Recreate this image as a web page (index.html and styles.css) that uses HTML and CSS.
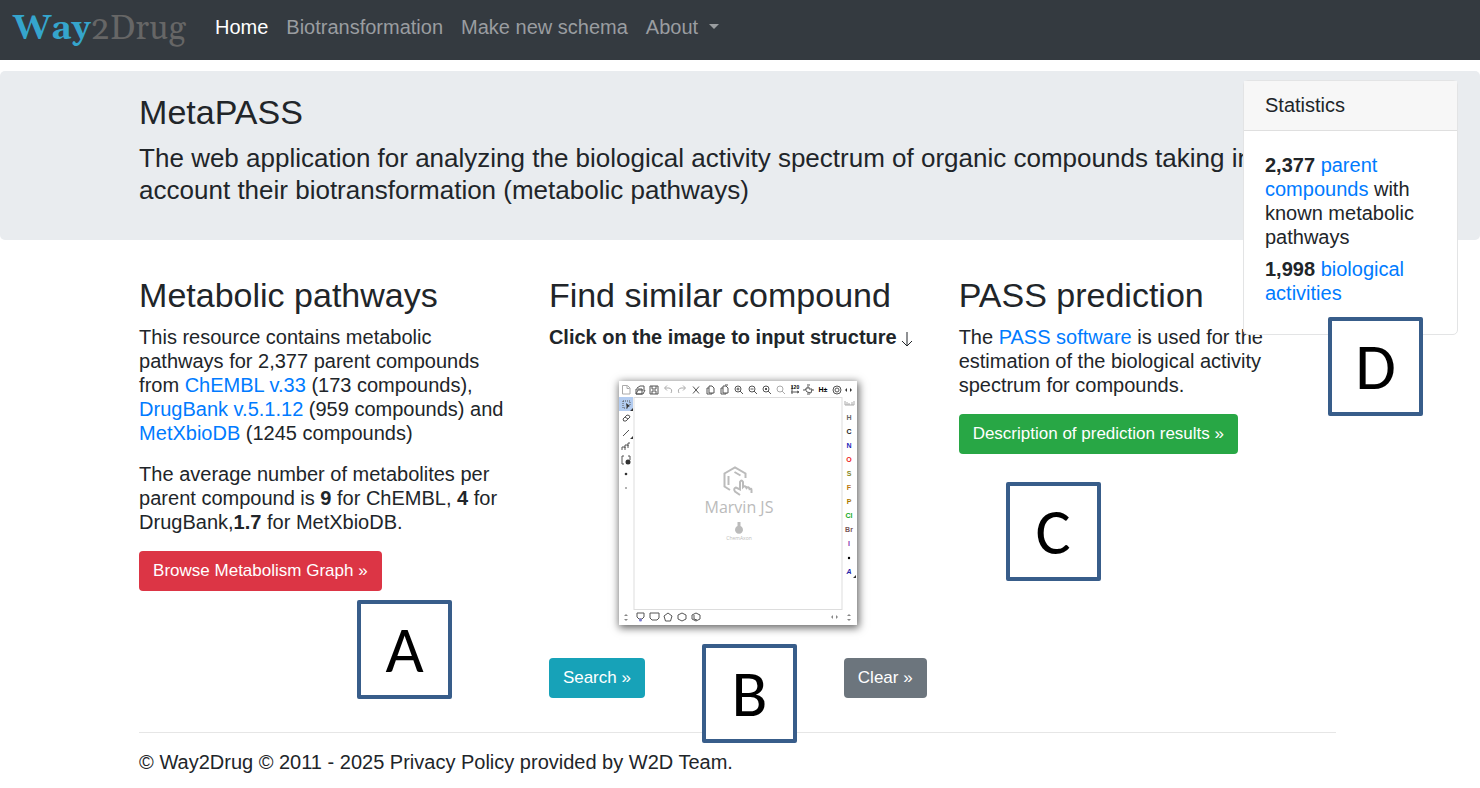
FILE: index.html
```html
<!DOCTYPE html>
<html lang="en">
<head>
<meta charset="utf-8">
<meta name="viewport" content="width=device-width, initial-scale=1">
<title>MetaPASS</title>
<link rel="stylesheet" href="styles.css">
</head>
<body>
<nav class="navbar">
  <a class="brand" href="#"><b>Way</b>2Drug</a>
  <a class="nav-link active" href="#">Home</a>
  <a class="nav-link" href="#">Biotransformation</a>
  <a class="nav-link" href="#">Make new schema</a>
  <a class="nav-link dropdown" href="#">About</a>
</nav>

<header class="hero">
  <div class="container">
    <h1>MetaPASS</h1>
    <p class="lead">The web application for analyzing the biological activity spectrum of organic compounds taking into account their biotransformation (metabolic pathways)</p>
  </div>
</header>

<aside class="stats">
  <h3>Statistics</h3>
  <div class="stats-body">
    <p><b>2,377</b> <a href="#">parent compounds</a> with known metabolic pathways</p>
    <p><b>1,998</b> <a href="#">biological activities</a></p>
  </div>
</aside>

<main class="container columns">
  <section>
    <h2>Metabolic pathways</h2>
    <p>This resource contains metabolic pathways for 2,377 parent compounds from <a href="#">ChEMBL v.33</a> (173 compounds), <a href="#">DrugBank v.5.1.12</a> (959 compounds) and <a href="#">MetXbioDB</a> (1245 compounds)</p>
    <p>The average number of metabolites per parent compound is <b>9</b> for ChEMBL, <b>4</b> for DrugBank,<b>1.7</b> for MetXbioDB.</p>
    <button class="btn red" type="button">Browse Metabolism Graph »</button>
    <span class="callout callout-a">A</span>
  </section>
  <section>
    <h2>Find similar compound</h2>
    <p class="hint"><b>Click on the image to input structure</b><svg class="arrow" viewBox="0 0 12 18" aria-hidden="true"><path d="M6 1V15M1 10L6 15L11 10"/></svg></p>
    <a class="editor" href="#" aria-label="Structure editor">
      <svg viewBox="0 0 238 244">
        <rect width="238" height="244" fill="#fff"/>
        <rect y="16" width="14" height="14" fill="#b3ccf0"/>
        <rect x="15" y="16.5" width="208" height="212" fill="#fff" stroke="#ddd"/>
        <g class="ink">
          <path class="pale" d="M3.500 4.500h5l2.500 2.500v6H3.500zM8 5v2.500h2.500"/>
          <path d="M17 13V8h6v5zM17 13l2-4h7l-2 4zM18 7l3-2h4v3"/>
          <path d="M31 5h8v8h-8zM33 5v3h4V5M33 13v-3h4v3"/>
          <path class="pale" d="M46 7h4q4 1 2 5M48 4.500l-2.500 2.500L48 9.500"/>
          <path class="pale" d="M66 7h-4q-4 1-2 5M64 4.500l2.500 2.500L64 9.500"/>
          <path d="M74 5.500l6 7M80 5.500l-6 7"/>
          <path d="M90 5h3l2 2v5h-5zM90 7h-2v6h5v-1"/>
          <path d="M104 5h3l2 2v5h-5zM104 7h-2v6h5v-1M106 4h3"/>
          <circle cx="119" cy="8" r="3"/><path d="M121 10l3 3M117.500 8h3M119 6.500v3"/>
          <circle cx="133" cy="8" r="3"/><path d="M135 10l3 3M131.500 8h3"/>
          <circle cx="147" cy="8" r="3"/><path d="M149 10l3 3M146 7l2 2M148 7l-2 2"/>
          <g class="pale"><circle cx="161" cy="8" r="3"/><path d="M163 10l3 3"/></g>
          <path d="M173 5v8M172 11h8M178 10l2 1-2 1"/>
          <path d="M188 4h3M188 13h3M184 9h2M193 9h2M188 11l-2-3h2V6h2v2h3l-1 4z"/>
          <circle cx="218" cy="9" r="4"/><circle cx="218" cy="9" r="2"/>
          <path d="M4 20h7v4M4 20v7h4" stroke-dasharray="1 1"/>
          <path d="M4 38l4-4q3 0 3 2l-4 4q-3 1-3-2zM6 36l3 2"/>
          <path d="M4 55l6-6"/>
          <path d="M3 69v-3h3v3M6 67v-3h3v3M9 65v-3h2"/>
          <path d="M5 75H3v8h2M9 75h2v4"/>
          <path d="M18 232h7v4l-2 2h-3l-2-2z"/>
          <path d="M31 232h9v5l-2 2h-5l-2-2z"/>
          <path d="M49 232l4 3-1.500 5h-5L45 235z"/>
          <path d="M63 232l4 2v4l-4 2-4-2v-4z"/>
          <path d="M77 232l4 2v4l-4 2-4-2v-4zM75 234v4l3 1"/>
          <path class="pale" d="M226 20v4h9v-4M228 24v-3M230 24v-2M233 24v-3"/>
        </g>
        <path class="solid" d="M7 22l4 3-2 1-1 2zM14 27v3h-3zM14 55v3h-3zM228 7v4l-2-2zM231 7v4l2-2zM237 194v3h-3z"/>
        <path class="faded" d="M214 234v4l-2-2zM217 234v4l2-2zM5 235l2-2 2 2zM5 238l2 2 2-2zM228 235l2-2 2 2zM228 238l2 2 2-2z"/>
        <circle cx="9" cy="81" r="2.500" fill="#333"/><circle cx="7" cy="93" r="1.300" fill="#333"/><circle cx="7" cy="107" r="1" fill="#999"/><circle cx="230" cy="177" r="1.200"/><circle cx="21.500" cy="239" r="1.500" fill="#77c"/>
        <g class="symbols">
          <text class="degrees" x="176" y="8">120</text><text x="204" y="11">H±</text>
          <text x="230" y="39" fill="#666">H</text><text x="230" y="53" fill="#222">C</text><text x="230" y="67" fill="#22b">N</text><text x="230" y="81" fill="#e22">O</text><text x="230" y="95" fill="#882">S</text><text x="230" y="109" fill="#b71">F</text><text x="230" y="123" fill="#a70">P</text><text x="230" y="137" fill="#1a2">Cl</text><text x="230" y="151" fill="#755">Br</text><text x="230" y="165" fill="#83a">I</text><text x="230" y="193" fill="#22a" font-style="italic">A</text>
        </g>
        <g class="logo">
          <path d="M111 109l-5.500-3.500V92.500l10.500-6 10.500 6V97M109.500 95v9M115.500 91l6 3.500"/>
          <path d="M121 114l-5-3.500q-2-3 1-4l4 2V101q1.500-3 3 0v5q2-2 3.500 1 2-2 3 1 2-1 2 1v3"/>
        </g>
        <text class="marvin" x="120" y="132">Marvin JS</text>
        <path d="M118.500 141h3v4a4 4 0 1 1-3 0z" fill="#bbb"/>
        <text class="maker" x="120" y="159">ChemAxon</text>
      </svg>
    </a>
    <div class="actions">
      <button class="btn teal" type="button">Search »</button>
      <button class="btn gray" type="button">Clear »</button>
    </div>
    <span class="callout callout-b">B</span>
  </section>
  <section>
    <h2>PASS prediction</h2>
    <p>The <a href="#">PASS software</a> is used for the estimation of the biological activity spectrum for compounds.</p>
    <button class="btn green" type="button">Description of prediction results »</button>
    <span class="callout callout-c">C</span>
  </section>
</main>
<span class="callout callout-d">D</span>

<footer class="container footer">
  <p>© Way2Drug © 2011 - 2025 Privacy Policy provided by W2D Team.</p>
</footer>
</body>
</html>
```
FILE: styles.css
```css
* { box-sizing: border-box; }
body {
  position: relative;
  margin: 0;
  background: #fff;
  color: #212529;
  font: 20px/24px "Liberation Sans", Arial, sans-serif;
}
a { color: #007bff; text-decoration: none; }
h1, h2, h3, p { margin: 0; }
h1, h2 { font-size: 34px; line-height: 40px; font-weight: 400; margin-bottom: 10px; }
.container { width: 80.9%; margin: 0 auto 0 9.4%; }

.navbar {
  display: flex;
  align-items: center;
  gap: 18px;
  height: 60px;
  padding: 0 13px 6px;
  background: #343a40;
}
.brand { margin-right: 11px; padding-top: 4px; color: #666; font: 34px/40px Gelasio, Georgia, "Liberation Serif", serif; }
.brand b { color: #35a5cd; }
.nav-link { color: #9a9da0; }
.nav-link.active { color: #fff; }
.dropdown::after {
  content: "";
  display: inline-block;
  margin-left: 11px;
  vertical-align: 5px;
  border: 5px solid transparent;
  border-top-color: currentColor;
  border-bottom: 0;
}

.hero { margin-top: 11px; padding: 21px 0 34px; background: #e9ecef; border-radius: 5px; }
.lead { font-size: 26px; line-height: 32px; }

.stats {
  position: absolute;
  z-index: 1;
  top: 80px;
  right: 22px;
  width: 215px;
  border: 1px solid #e3e4e5;
  border-radius: 5px;
  background: #fff;
}
.stats h3 {
  padding: 12px 21px 13px;
  font-size: 20px;
  line-height: 24px;
  font-weight: 400;
  background: #f7f7f7;
  border-bottom: 1px solid #dfdfdf;
}
.stats-body { padding: 22px 21px 29px; }
.stats-body p + p { margin-top: 8px; }

.columns {
  display: grid;
  grid-template-columns: repeat(3, 1fr);
  gap: 32px;
  padding-top: 35px;
}
.columns section { position: relative; }
.columns p { margin-bottom: 17px; }
.btn {
  height: 40px;
  padding: 0 14px;
  border: 0;
  border-radius: 4px;
  color: #fff;
  font: 17px/24px "Liberation Sans", Arial, sans-serif;
}
.red { background: #dc3545; }
.green { background: #28a745; }
.teal { background: #17a2b8; }
.gray { background: #6c757d; }

.arrow { width: 12px; height: 18px; margin-left: 4px; vertical-align: -5px; fill: none; stroke: #212529; }
.editor { display: block; width: 238px; margin: 32px auto 33px; box-shadow: 1px 2px 8px 1px #666; }
.editor svg { display: block; width: 100%; }
.ink { fill: none; stroke: #555; stroke-width: 1; }
.pale { stroke: #aaa; }
.solid { fill: #333; }
.faded { fill: #888; }
.symbols { font: bold 7px "Liberation Sans", sans-serif; text-anchor: middle; }
.degrees { font-size: 5px; }
.logo { fill: none; stroke: #bbb; stroke-width: 2; }
.marvin { font: 16px "Open Sans", sans-serif; text-anchor: middle; fill: #bbb; }
.maker { font: 5px "Open Sans", sans-serif; text-anchor: middle; fill: #bbb; }
.actions { display: flex; justify-content: space-between; }

.callout {
  position: absolute;
  z-index: 2;
  display: flex;
  align-items: center;
  justify-content: center;
  width: 95px;
  height: 99px;
  border: 4px solid #385d8a;
  border-radius: 2px;
  background: #fff;
  color: #000;
  font: 66px/72px Carlito, Lato, sans-serif;
}
.callout-a { left: 218px; top: 325px; }
.callout-b { left: 153px; top: 369px; }
.callout-c { left: 47px; top: 207px; }
.callout-d { right: 57px; top: 317px; }

.footer { margin-top: 34px; }
.footer p { padding: 17px 0; border-top: 1px solid #e6e6e6; }
```
